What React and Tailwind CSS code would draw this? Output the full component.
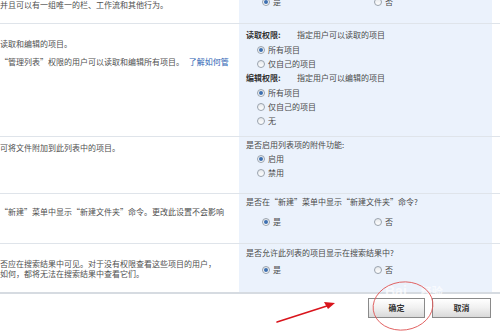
import React from 'react';

const font = { fontFamily: '"Noto Sans CJK SC", "Noto Sans", sans-serif' };

const Radio = ({ checked }) => (
  <span className="inline-flex items-center justify-center w-[8px] h-[8px] rounded-full border border-[#9aa3ad] bg-gradient-to-b from-[#e6e9ec] to-white shrink-0">
    {checked && <span className="w-[4px] h-[4px] rounded-full bg-[#3d6fb0]" />}
  </span>
);

const Option = ({ checked, label, className = '' }) => (
  <div className={`flex items-center gap-[3px] h-[14px] ${className}`}>
    <Radio checked={checked} />
    <span>{label}</span>
  </div>
);

const YesNo = ({ className = '' }) => (
  <div className={`flex items-center pl-[16px] ${className}`}>
    <Option checked label="是" className="w-[112px]" />
    <Option label="否" />
  </div>
);

const Row = ({ left, right, className = '' }) => (
  <div className={`flex border-b border-[#dfe4ea] ${className}`}>
    <div className="w-[239px] shrink-0 text-[#505050]">{left}</div>
    <div className="w-[253px] shrink-0 bg-[#ebf2fc] pl-[7px] text-[#4a4a4a]">{right}</div>
    <div className="flex-1" />
  </div>
);

const Button = ({ children, className = '' }) => (
  <button className={`h-[20px] border border-[#8a8a8a] bg-gradient-to-b from-white via-[#f0f0f0] to-[#d9d9d9] text-[8px] font-bold text-[#333] ${className}`}>
    {children}
  </button>
);

export default function App() {
  return (
    <div className="relative w-[500px] h-[331px] bg-white overflow-hidden text-[8px] leading-[14px]" style={font}>
      <Row
        className="h-[24px]"
        left={<div className="mt-[-2px]">并且可以有一组唯一的栏、工作流和其他行为。</div>}
        right={<YesNo className="mt-[-5px]" />}
      />

      <Row
        className="h-[113px]"
        left={
          <div className="pt-[13px]">
            <div>读取和编辑的项目。</div>
            <div className="mt-[4px]">
              “管理列表”权限的用户可以读取和编辑所有项目。 <span className="text-[#2b5fb3] ml-[3px]">了解如何管</span>
            </div>
          </div>
        }
        right={
          <div className="pt-[4px]">
            <div className="flex">
              <span className="w-[51px] font-bold text-[#333]">读取权限:</span>
              <span>指定用户可以读取的项目</span>
            </div>
            <div className="pl-[11px] mt-[1px]">
              <Option checked label="所有项目" />
              <Option label="仅自己的项目" />
            </div>
            <div className="flex">
              <span className="w-[51px] font-bold text-[#333]">编辑权限:</span>
              <span>指定用户可以编辑的项目</span>
            </div>
            <div className="pl-[11px] mt-[1px]">
              <Option checked label="所有项目" />
              <Option label="仅自己的项目" />
              <Option label="无" />
            </div>
          </div>
        }
      />

      <Row
        className="h-[57px]"
        left={<div className="pt-[4px]">可将文件附加到此列表中的项目。</div>}
        right={
          <div className="pt-[1px]">
            <div>是否启用列表项的附件功能:</div>
            <div className="pl-[11px]">
              <Option checked label="启用" />
              <Option label="禁用" />
            </div>
          </div>
        }
      />

      <Row
        className="h-[50px]"
        left={<div className="pt-[11px]">“新建”菜单中显示“新建文件夹”命令。更改此设置不会影响</div>}
        right={
          <div className="pt-[1px]">
            <div>是否在“新建”菜单中显示“新建文件夹”命令?</div>
            <YesNo className="mt-[6px]" />
          </div>
        }
      />

      <Row
        className="h-[50px] border-b-[2px] border-b-[#d6dbe1]"
        left={
          <div className="pt-[15px] leading-[10px]">
            <div>否应在搜索结果中可见。对于没有权限查看这些项目的用户，</div>
            <div>如何，都将无法在搜索结果中查看它们。</div>
          </div>
        }
        right={
          <div className="pt-[2px]">
            <div>是否允许此列表的项目显示在搜索结果中?</div>
            <YesNo className="mt-[3px]" />
          </div>
        }
      />

      {/* footer buttons */}
      <div className="flex justify-end gap-[7px] pr-[9px] pt-[4px]">
        <Button className="w-[57px]">确定</Button>
        <Button className="w-[59px]">取消</Button>
      </div>

      {/* watermark */}
      <div className="absolute left-[385px] top-[284px] text-[14px] font-bold text-white/70 leading-none" style={{ fontFamily: '"Liberation Sans", "Noto Sans CJK SC", sans-serif' }}>
        Bai<span className="ml-[14px] text-[11px]">经验</span>
      </div>

      {/* red annotation */}
      <svg className="absolute left-0 top-0 pointer-events-none" width="500" height="331" viewBox="0 0 500 331">
        <ellipse cx="403" cy="306" rx="30" ry="24" fill="none" stroke="#e05a5a" strokeWidth="0.9" transform="rotate(-8 403 306)" />
        <path d="M277 322 L330 305" stroke="#d9141c" strokeWidth="1.6" strokeLinecap="round" />
        <path d="M335 303 L324 302 L328 309 Z" fill="#d9141c" />
      </svg>
    </div>
  );
}
